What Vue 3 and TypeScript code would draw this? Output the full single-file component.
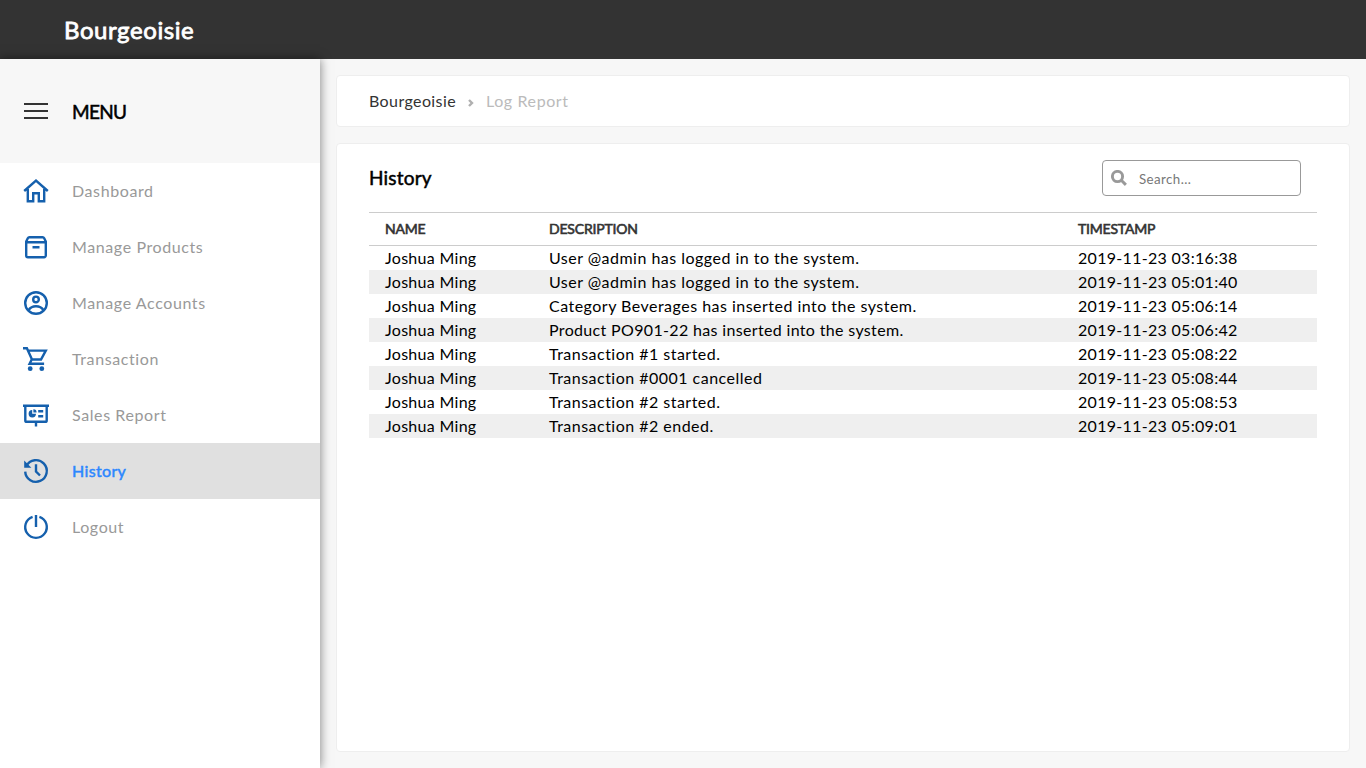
<script setup lang="ts">
interface MenuItem { label: string; icon: string; active?: boolean }
interface LogEntry { name: string; description: string; timestamp: string }

const menu: MenuItem[] = [
  { label: 'Dashboard', icon: 'home' },
  { label: 'Manage Products', icon: 'box' },
  { label: 'Manage Accounts', icon: 'user' },
  { label: 'Transaction', icon: 'cart' },
  { label: 'Sales Report', icon: 'report' },
  { label: 'History', icon: 'history', active: true },
  { label: 'Logout', icon: 'power' },
]

const logs: LogEntry[] = [
  { name: 'Joshua Ming', description: 'User @admin has logged in to the system.', timestamp: '2019-11-23 03:16:38' },
  { name: 'Joshua Ming', description: 'User @admin has logged in to the system.', timestamp: '2019-11-23 05:01:40' },
  { name: 'Joshua Ming', description: 'Category Beverages has inserted into the system.', timestamp: '2019-11-23 05:06:14' },
  { name: 'Joshua Ming', description: 'Product PO901-22 has inserted into the system.', timestamp: '2019-11-23 05:06:42' },
  { name: 'Joshua Ming', description: 'Transaction #1 started.', timestamp: '2019-11-23 05:08:22' },
  { name: 'Joshua Ming', description: 'Transaction #0001 cancelled', timestamp: '2019-11-23 05:08:44' },
  { name: 'Joshua Ming', description: 'Transaction #2 started.', timestamp: '2019-11-23 05:08:53' },
  { name: 'Joshua Ming', description: 'Transaction #2 ended.', timestamp: '2019-11-23 05:09:01' },
]
</script>

<template>
  <div class="page">
    <header class="topbar"><span class="brand">Bourgeoisie</span></header>
    <div class="body">
      <aside class="sidebar">
        <div class="menu-head">
          <svg class="icon burger" viewBox="0 0 28 28"><path d="M2 7h24M2 14h24M2 21h24" /></svg>
          <span class="menu-title">MENU</span>
        </div>
        <nav>
          <a v-for="item in menu" :key="item.label" class="menu-item" :class="{ active: item.active }">
            <svg class="icon" viewBox="0 0 28 28">
              <g v-if="item.icon === 'home'">
                <path d="M2.2 14 14 3.6 25.800 14M5.800 12v12.200h5.400v-8h5.600v8h5.400V12" />
              </g>
              <g v-else-if="item.icon === 'box'">
                <path d="M4.2 8.500 5.800 5.200q.5-1 1.600-1h13.200q1.100 0 1.600 1l1.600 3.300v14a1.700 1.700 0 0 1-1.700 1.700H5.900a1.700 1.700 0 0 1-1.700-1.700zM4.200 9.300h19.600M10.500 14.200h7" />
              </g>
              <g v-else-if="item.icon === 'user'">
                <circle cx="14" cy="14" r="10.8" />
                <circle cx="14" cy="10.4" r="2.8" />
                <path d="M6.4 21.3c1.8-2.8 4.3-4 7.600-4s5.800 1.200 7.600 4" />
              </g>
              <g v-else-if="item.icon === 'cart'">
                <path d="M1 3.3h3.9l5.100 11.200h9l4.800-8.900H6M9.600 14.800 7.600 18.700h14.500" />
                <circle class="solid" cx="8.2" cy="23.7" r="2.4" />
                <circle class="solid" cx="19.8" cy="23.7" r="2.4" />
              </g>
              <g v-else-if="item.icon === 'report'">
                <path d="M1 4.7h26M3.3 5v14.400q0 1.400 1.400 1.400h18.600q1.400 0 1.400-1.400V5M14 21v4.500M16.200 10.200h5M16.200 15.200h5" />
                <path class="solid" d="M10.200 9v3.800H14A3.700 3.700 0 1 1 10.200 9z" />
                <path class="solid" d="M11.400 8.300v3.200h3.200a3.200 3.200 0 0 0-3.200-3.200z" />
              </g>
              <g v-else-if="item.icon === 'history'">
                <path d="M4.400 9a10.800 10.800 0 1 1-1.200 5.600M14 7.200v7.300l4 4" />
                <path class="solid" d="M2.200 3.500v7.300h7.200z" />
              </g>
              <g v-else>
                <path d="M10.600 3.800a10.800 10.800 0 1 0 6.800 0M14 2v12" />
              </g>
            </svg>
            <span>{{ item.label }}</span>
          </a>
        </nav>
      </aside>
      <main class="content">
        <section class="card crumbs">
          <span class="crumb-root">Bourgeoisie</span>
          <svg class="chevron" viewBox="0 0 6 8"><path d="M1 1l3 3-3 3" /></svg>
          <span class="crumb-current">Log Report</span>
        </section>
        <section class="card report">
          <div class="report-head">
            <h1>History</h1>
            <label class="search">
              <svg class="search-icon" viewBox="0 0 16 16"><circle cx="6.5" cy="6.5" r="5.1" /><path d="M10.3 10.3l4.600 4.600" /></svg>
              <input type="text" placeholder="Search..." />
            </label>
          </div>
          <table>
            <thead>
              <tr><th class="col-name">NAME</th><th class="col-desc">DESCRIPTION</th><th class="col-time">TIMESTAMP</th></tr>
            </thead>
            <tbody>
              <tr v-for="(log, i) in logs" :key="i">
                <td class="col-name">{{ log.name }}</td>
                <td class="col-desc">{{ log.description }}</td>
                <td class="col-time">{{ log.timestamp }}</td>
              </tr>
            </tbody>
          </table>
        </section>
      </main>
    </div>
  </div>
</template>

<style>
body { margin: 0; overflow: hidden; }
</style>

<style scoped>
.page {
  display: flex;
  flex-direction: column;
  height: 100vh;
  background: #f7f7f7;
  color: #000;
  font: 16px/24px Lato, "Open Sans", sans-serif;
}
.topbar { display: flex; flex: none; height: 59px; box-sizing: border-box; padding: 0 64px; background: #333; color: #fff; }
.brand { font-size: 24px; line-height: 59px; letter-spacing: .58px; -webkit-text-stroke: .8px currentColor; }
.body { display: flex; flex: 1; min-height: 0; }
.sidebar { position: relative; flex: 0 0 320px; background: #fff; box-shadow: 0 0 10px rgba(0, 0, 0, .5); }
.menu-head { display: flex; align-items: center; gap: 22px; height: 104px; padding-left: 22px; background: #f7f7f7; }
.menu-title { padding-top: 1px; font-size: 19px; letter-spacing: -.7px; -webkit-text-stroke: .5px currentColor; }
.icon { flex: none; width: 28px; height: 28px; fill: none; stroke: #1560ad; stroke-width: 2.4; }
.icon .solid { fill: #1560ad; stroke: none; }
.icon.burger { stroke: #333; stroke-width: 2; }
.menu-item { display: flex; align-items: center; gap: 22px; height: 56px; padding-left: 22px; color: #999; letter-spacing: .6px; }
.menu-item.active { background: #e0e0e0; color: #2c87ff; letter-spacing: .35px; }
.menu-item.active span { -webkit-text-stroke: .5px currentColor; }
.content { display: flex; flex: 1; flex-direction: column; gap: 16px; padding: 16px; min-width: 0; }
.card { box-sizing: border-box; background: #fff; border: 1px solid #eee; border-radius: 4px; }
.crumbs { display: flex; flex: 0 0 52px; align-items: center; padding-left: 32px; letter-spacing: .4px; }
.crumb-root { width: 99px; color: #333; }
.chevron { width: 6px; height: 8px; margin: 3px 12px 0 0; fill: none; stroke: #b0b0b0; stroke-width: 2.4; }
.crumb-current { color: #bbb; letter-spacing: .6px; }
.report { flex: 1; padding: 16px 32px; }
.report-head { display: flex; align-items: center; justify-content: space-between; height: 36px; padding-right: 16px; }
h1 { margin: 0; font-size: 19px; line-height: 24px; font-weight: 400; letter-spacing: .2px; -webkit-text-stroke: .5px currentColor; }
.search { display: flex; align-items: center; box-sizing: border-box; width: 199px; height: 36px; padding-left: 8px; border: 1px solid #999; border-radius: 4px; }
.search-icon { flex: none; width: 16px; height: 16px; fill: none; stroke: #999; stroke-width: 2.9; }
input { width: 140px; margin-left: 12px; padding: 2px 0 0; border: 0; outline: 0; background: none; font: 13.333px Lato, sans-serif; letter-spacing: .4px; }
input::placeholder { color: #777; }
table { width: 100%; margin-top: 16px; border-collapse: separate; border-spacing: 0; table-layout: fixed; }
th { height: 32px; padding: 0 0 0 16px; border: solid #ccc; border-width: 1px 0; text-align: left; font-size: 14px; line-height: 32px; font-weight: 400; letter-spacing: -.2px; color: #333; -webkit-text-stroke: .6px currentColor; }
td { height: 24px; padding: 0 0 0 16px; line-height: 24px; letter-spacing: .48px; white-space: nowrap; }
td.col-name, td.col-time { letter-spacing: .3px; }
tbody tr:nth-child(even) { background: #efefef; }
tbody tr:nth-child(4) .col-desc { letter-spacing: .34px; }
.col-name { width: 148px; }
.col-desc { width: 513px; }
</style>
